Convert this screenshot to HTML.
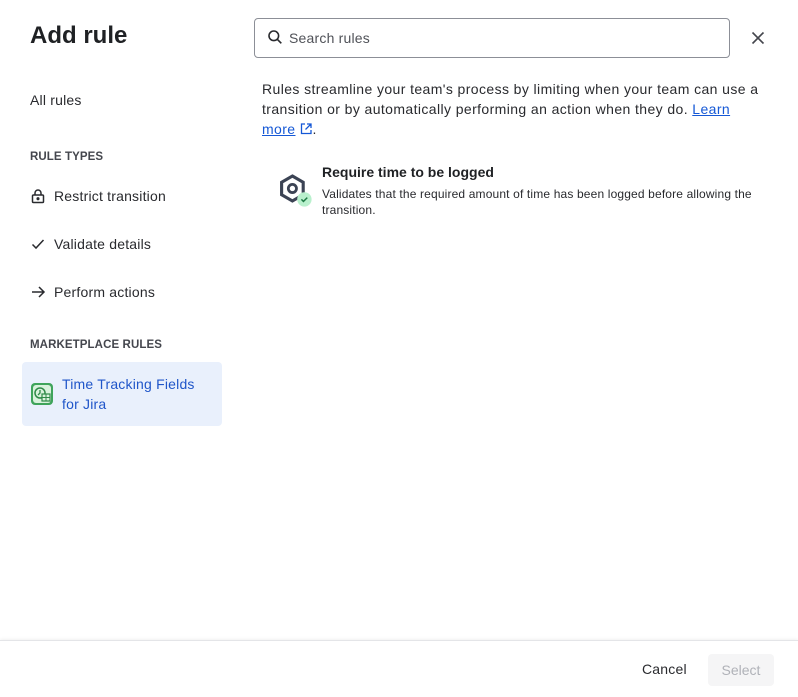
<!DOCTYPE html>
<html><head><meta charset="utf-8"><style>
*{box-sizing:border-box;margin:0;padding:0}
body{width:798px;height:697px;background:#fff;font-family:"Liberation Sans",sans-serif;color:#292a2e;position:relative;overflow:hidden}
.abs{position:absolute}
h1{position:absolute;left:30px;top:22px;font-size:24px;font-weight:bold;color:#1f2124}
.nav{font-size:14px;color:#292a2e;letter-spacing:.2px}
.hd{font-size:11.5px;font-weight:bold;color:#44464d;letter-spacing:.1px}
.search{left:254px;top:18px;width:476px;height:40px;border:1px solid #8c8f97;border-radius:4px;font-size:14px;color:#505258;padding:11px 0 0 34px;letter-spacing:.2px}
p.desc{left:262px;top:79px;width:505px;font-size:14px;line-height:20px;color:#292a2e;letter-spacing:.4px}
a{color:#1558d6;text-decoration:underline}
.sel{left:22px;top:362px;width:200px;height:64px;background:#e9f0fc;border-radius:4px}
.footer{left:0;top:640px;width:798px;height:57px;border-top:1px solid #e4e5e8;box-shadow:0 -1px 3px rgba(0,0,0,.06)}
</style></head><body>
<h1>Add rule</h1>
<div class="abs nav" style="left:30px;top:92px">All rules</div>
<div class="abs hd" style="left:30px;top:151px">RULE TYPES</div>
<svg class="abs" style="left:30px;top:188px" width="16" height="16" viewBox="0 0 16 16" fill="none" stroke="#292a2e" stroke-width="1.5"><rect x="2.5" y="7" width="11" height="7.5" rx="1"/><path d="M5 7V5a3 3 0 0 1 6 0v2"/><circle cx="8" cy="10.7" r=".8" fill="#292a2e"/></svg>
<div class="abs nav" style="left:54px;top:188px">Restrict transition</div>
<svg class="abs" style="left:30px;top:236px" width="16" height="16" viewBox="0 0 16 16" fill="none" stroke="#292a2e" stroke-width="1.5"><path d="M2.5 8.5l3.5 3.5 7.5-8"/></svg>
<div class="abs nav" style="left:54px;top:236px">Validate details</div>
<svg class="abs" style="left:30px;top:284px" width="16" height="16" viewBox="0 0 16 16" fill="none" stroke="#292a2e" stroke-width="1.5"><path d="M2 8h12M9 3l5 5-5 5"/></svg>
<div class="abs nav" style="left:54px;top:284px">Perform actions</div>
<div class="abs hd" style="left:30px;top:339px">MARKETPLACE RULES</div>
<div class="abs sel"></div>
<svg class="abs" style="left:30px;top:382px" width="24" height="24" viewBox="0 0 24 24"><rect x="1" y="1" width="22" height="22" rx="4" fill="#3fa45b"/><rect x="3" y="3" width="18" height="18" rx="3" fill="#d8f2dc"/><circle cx="10" cy="11" r="5" fill="none" stroke="#2f8a48" stroke-width="1.5"/><path d="M10 8v3l-2 2" stroke="#2f8a48" stroke-width="1.3" fill="none"/><rect x="12" y="12" width="8" height="7" fill="#d8f2dc" stroke="#2f8a48" stroke-width="1.2"/><path d="M12 15.5h8M16 12v7" stroke="#2f8a48" stroke-width="1"/></svg>
<div class="abs" style="left:62px;top:374px;font-size:14px;line-height:20px;color:#1f55c9;letter-spacing:.2px">Time Tracking Fields<br>for Jira</div>
<div class="abs search">Search rules</div>
<svg class="abs" style="left:267px;top:29px" width="16" height="16" viewBox="0 0 16 16" fill="none" stroke="#292a2e" stroke-width="1.6"><circle cx="6.8" cy="6.8" r="4.8"/><path d="M10.3 10.3l4 4"/></svg>
<svg class="abs" style="left:750px;top:30px" width="16" height="16" viewBox="0 0 16 16" stroke="#44464d" stroke-width="1.6"><path d="M2.5 2.5l11 11M13.5 2.5l-11 11"/></svg>
<p class="abs desc">Rules streamline your team's process by limiting when your team can use a transition or by automatically performing an action when they do. <a>Learn more</a><svg width="14" height="14" viewBox="0 0 14 14" fill="none" stroke="#1558d6" stroke-width="1.3" style="vertical-align:-2px;margin-left:3px"><path d="M6 2H2.5v9.5H12V8M8 2h4v4M12 2L6.5 7.5"/></svg>.</p>
<svg class="abs" style="left:278px;top:173px" width="36" height="36" viewBox="0 0 30 30"><path d="M12 2.5l9 5.2v10.4l-9 5.2-9-5.2V7.7z" fill="none" stroke="#3b4354" stroke-width="2.6"/><circle cx="12" cy="12.9" r="3.4" fill="none" stroke="#3b4354" stroke-width="2.3"/><circle cx="22" cy="22" r="6" fill="#b9f0cd"/><path d="M19.5 22l1.7 1.7 3.2-3.2" fill="none" stroke="#1d7a44" stroke-width="1.2"/></svg>
<div class="abs" style="left:322px;top:164px;font-size:14px;font-weight:bold;color:#1f2124">Require time to be logged</div>
<div class="abs" style="left:322px;top:186px;width:430px;font-size:12px;line-height:16px;color:#292a2e;letter-spacing:.15px">Validates that the required amount of time has been logged before allowing the transition.</div>
<div class="abs footer"></div>
<div class="abs" style="left:642px;top:661px;font-size:14px;color:#292a2e;letter-spacing:.2px">Cancel</div>
<div class="abs" style="left:708px;top:654px;width:66px;height:32px;background:#f5f5f6;border-radius:4px;font-size:14px;color:#b0b2b8;text-align:center;line-height:32px">Select</div>
</body></html>
